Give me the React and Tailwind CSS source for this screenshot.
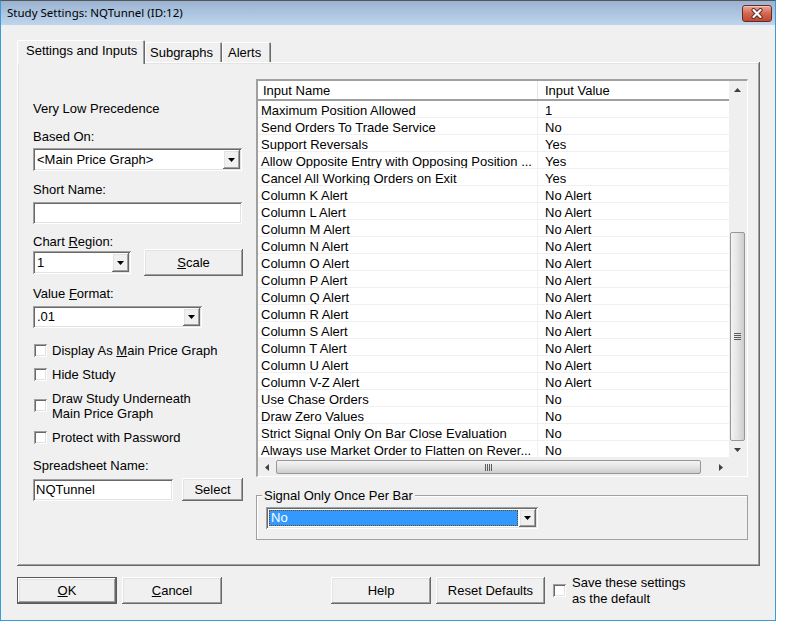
import React from "react";

const RAISED =
  "shadow-[inset_-1px_-1px_#696969,inset_1px_1px_#ffffff,inset_-2px_-2px_#a0a0a0,inset_2px_2px_#e3e3e3]";
const SUNKEN =
  "shadow-[inset_1px_1px_#a0a0a0,inset_-1px_-1px_#ffffff,inset_2px_2px_#696969,inset_-2px_-2px_#e3e3e3]";

function Tri({ dir = "down", color = "#000" }) {
  if (dir === "down")
    return (
      <svg width="7" height="4" viewBox="0 0 7 4">
        <path d="M0 0H7L3.5 4Z" fill={color} />
      </svg>
    );
  if (dir === "up")
    return (
      <svg width="7" height="4" viewBox="0 0 7 4">
        <path d="M0 4H7L3.5 0Z" fill={color} />
      </svg>
    );
  if (dir === "left")
    return (
      <svg width="4" height="7" viewBox="0 0 4 7">
        <path d="M4 0V7L0 3.5Z" fill={color} />
      </svg>
    );
  return (
    <svg width="4" height="7" viewBox="0 0 4 7">
      <path d="M0 0V7L4 3.5Z" fill={color} />
    </svg>
  );
}

function Combo({ className, children, inner }) {
  return (
    <div className={`flex bg-white p-[2px] ${SUNKEN} ${className}`}>
      {inner || (
        <div className="flex-1 flex items-center pl-[2px] whitespace-nowrap overflow-hidden">
          {children}
        </div>
      )}
      <div className={`w-[17px] shrink-0 flex items-center justify-center bg-[#f0f0f0] ${RAISED}`}>
        <Tri />
      </div>
    </div>
  );
}

function Field({ className, children }) {
  return (
    <div className={`flex items-center bg-white pl-[3px] ${SUNKEN} ${className}`}>{children}</div>
  );
}

function Btn({ className, children }) {
  return (
    <div className={`flex items-center justify-center bg-[#f0f0f0] ${RAISED} ${className}`}>
      {children}
    </div>
  );
}

function Check() {
  return <div className={`w-[13px] h-[13px] shrink-0 bg-white ${SUNKEN}`} />;
}

const ROWS = [
  ["Maximum Position Allowed", "1"],
  ["Send Orders To Trade Service", "No"],
  ["Support Reversals", "Yes"],
  ["Allow Opposite Entry with Opposing Position ...", "Yes"],
  ["Cancel All Working Orders on Exit", "Yes"],
  ["Column K Alert", "No Alert"],
  ["Column L Alert", "No Alert"],
  ["Column M Alert", "No Alert"],
  ["Column N Alert", "No Alert"],
  ["Column O Alert", "No Alert"],
  ["Column P Alert", "No Alert"],
  ["Column Q Alert", "No Alert"],
  ["Column R Alert", "No Alert"],
  ["Column S Alert", "No Alert"],
  ["Column T Alert", "No Alert"],
  ["Column U Alert", "No Alert"],
  ["Column V-Z Alert", "No Alert"],
  ["Use Chase Orders", "No"],
  ["Draw Zero Values", "No"],
  ["Strict Signal Only On Bar Close Evaluation", "No"],
  ["Always use Market Order to Flatten on Rever...", "No"],
];

function InputsTable() {
  return (
    <div className="w-[492px] h-[398px] flex flex-col border-t-2 border-l-2 border-r border-b border-t-[#a0a0a0] border-l-[#a0a0a0] border-r-white border-b-white">
      <div className="flex flex-1 min-h-0">
        <div className="w-[471px] flex flex-col bg-white">
          <div className="h-[20px] flex border-b-2 border-[#a0a0a0] bg-white">
            <div className="w-[280px] pl-[5px] pt-[1px] leading-[17px] border-r border-[#e5e5e5]">Input Name</div>
            <div className="flex-1 pl-[7px] pt-[1px] leading-[17px]">Input Value</div>
          </div>
          {ROWS.map(([n, v], i) => (
            <div key={i} className="h-[17px] flex border-b border-[#f0f0f0]">
              <div className="w-[280px] pl-[3px] pt-[3px] leading-[13px] whitespace-nowrap overflow-hidden border-r border-[#f0f0f0]">
                {n}
              </div>
              <div className="flex-1 pl-[7px] pt-[3px] leading-[13px] whitespace-nowrap">{v}</div>
            </div>
          ))}
        </div>
        <div className="w-[17px] flex flex-col bg-[#efefef]">
          <div className="h-[17px] flex items-center justify-center">
            <Tri dir="up" color="#404040" />
          </div>
          <div className="flex-1" />
          <div className="h-[209px] mx-[1px] rounded-[2px] border border-[#979797] bg-gradient-to-r from-[#f4f4f4] via-[#e4e4e4] to-[#cdcdcd] flex items-center justify-center">
            <div className="flex flex-col gap-[1px]">
              <div className="w-[7px] h-[1px] bg-[#5c5c5c]" />
              <div className="w-[7px] h-[1px] bg-[#5c5c5c]" />
              <div className="w-[7px] h-[1px] bg-[#5c5c5c]" />
              <div className="w-[7px] h-[1px] bg-[#5c5c5c]" />
            </div>
          </div>
          <div className="h-[17px] flex items-center justify-center">
            <Tri dir="down" color="#404040" />
          </div>
        </div>
      </div>
      <div className="h-[18px] flex">
        <div className="w-[471px] flex bg-[#efefef]">
          <div className="w-[17px] flex items-center justify-center">
            <Tri dir="left" color="#404040" />
          </div>
          <div className="w-[425px] my-[2px] ml-[1px] rounded-[2px] border border-[#979797] bg-gradient-to-b from-[#f4f4f4] via-[#e4e4e4] to-[#cdcdcd] flex items-center justify-center">
            <div className="flex gap-[1px]">
              <div className="w-[1px] h-[7px] bg-[#5c5c5c]" />
              <div className="w-[1px] h-[7px] bg-[#5c5c5c]" />
              <div className="w-[1px] h-[7px] bg-[#5c5c5c]" />
              <div className="w-[1px] h-[7px] bg-[#5c5c5c]" />
            </div>
          </div>
          <div className="flex-1" />
          <div className="w-[17px] flex items-center justify-center">
            <Tri dir="right" color="#404040" />
          </div>
        </div>
        <div className="w-[17px] bg-[#efefef]" />
      </div>
    </div>
  );
}

export default function App() {
  return (
    <div className="w-[799px] h-[635px] bg-white font-['Liberation_Sans',Arial,sans-serif] text-[13px] text-black">
      <div className="w-[776px] h-[621px] flex flex-col border border-[#3b9ad8] border-t-[#555555] bg-[#f0f0f0]">
        {/* Title bar */}
        <div className="h-[24px] flex justify-between bg-gradient-to-b from-[#9ab3d1] to-[#bfd5ed]">
          <div className="pl-[6px] flex items-center font-['Noto_Sans',sans-serif] text-[11.5px] text-black">
            Study Settings: NQTunnel (ID:12)
          </div>
          <div className="mt-[4px] mr-[3px] w-[30px] h-[17px] rounded-[3px] border border-[#6a2a23] bg-gradient-to-b from-[#e9a898] via-[#d4664f] to-[#c04834] shadow-[inset_0_1px_#f4c7ba] flex items-center justify-center">
            <svg width="14" height="11" viewBox="0 0 14 11">
              <path d="M3.5 2 L10.5 9 M10.5 2 L3.5 9" stroke="#5b2620" strokeWidth="4" strokeLinecap="round" />
              <path d="M3.5 2 L10.5 9 M10.5 2 L3.5 9" stroke="#ffffff" strokeWidth="2.2" strokeLinecap="round" />
            </svg>
          </div>
        </div>

        {/* Body */}
        <div className="flex-1 flex flex-col pl-[16px] pr-[15px] pt-[15px]">
          {/* Tabs */}
          <div className="flex items-end h-[22px]">
            <div className="relative z-10 w-[128px] h-[24px] -mb-[2px] pl-[9px] pt-[3px] leading-[16px] bg-[#f0f0f0] shadow-[inset_1px_1px_#ffffff,inset_-1px_0_#696969,inset_-2px_0_#a0a0a0] rounded-t-[2px]">
              Settings and Inputs
            </div>
            <div className="w-[77px] h-[20px] pl-[5px] pt-[3px] leading-[16px] shadow-[inset_1px_1px_#ffffff,inset_-1px_0_#696969,inset_-2px_0_#a0a0a0] rounded-t-[2px]">
              Subgraphs
            </div>
            <div className="w-[49px] h-[20px] pl-[6px] pt-[3px] leading-[16px] shadow-[inset_1px_1px_#ffffff,inset_-1px_0_#696969,inset_-2px_0_#a0a0a0] rounded-t-[2px]">
              Alerts
            </div>
          </div>

          {/* Panel */}
          <div className={`w-[743px] h-[504px] flex pl-[16px] bg-[#f0f0f0] ${RAISED}`}>
            {/* Left column */}
            <div className="w-[210px] flex flex-col">
              <div className="mt-[37px] h-[16px] pt-[2px] leading-[16px]">Very Low Precedence</div>
              <div className="mt-[12px] h-[16px] pt-[2px] leading-[16px]">Based On:</div>
              <Combo className="mt-[5px] w-[209px] h-[23px]">&lt;Main Price Graph&gt;</Combo>
              <div className="mt-[9px] h-[16px] pt-[2px] leading-[16px]">Short Name:</div>
              <Field className="mt-[6px] w-[209px] h-[22px]" />
              <div className="mt-[9px] h-[16px] pt-[1px] leading-[16px]">
                Chart <span className="underline">R</span>egion:
              </div>
              <div className="flex items-start h-[27px]">
                <Combo className="mt-[2px] w-[98px] h-[23px]">1</Combo>
                <Btn className="ml-[13px] w-[99px] h-[27px]">
                  <span>
                    <span className="underline">S</span>cale
                  </span>
                </Btn>
              </div>
              <div className="mt-[8px] h-[16px] pt-[2px] leading-[16px]">
                Value <span className="underline">F</span>ormat:
              </div>
              <Combo className="mt-[6px] w-[169px] h-[22px]">.01</Combo>

              <div className="mt-[14px] flex items-center gap-[5px] ml-[1px] h-[16px]">
                <Check />
                <span className="leading-[16px] pt-[1px]">
                  Display As <span className="underline">M</span>ain Price Graph
                </span>
              </div>
              <div className="mt-[8px] flex items-center gap-[5px] ml-[1px] h-[16px]">
                <Check />
                <span className="leading-[16px] pt-[1px]">Hide Study</span>
              </div>
              <div className="mt-[8px] flex items-center gap-[5px] ml-[1px] h-[30px]">
                <Check />
                <span className="leading-[15px] pt-[1px]">
                  Draw Study Underneath
                  <br />
                  Main Price Graph
                </span>
              </div>
              <div className="mt-[9px] flex items-center gap-[5px] ml-[1px] h-[16px]">
                <Check />
                <span className="leading-[16px] pt-[1px]">Protect with Password</span>
              </div>
              <div className="mt-[12px] h-[16px] pt-[1px] leading-[16px]">Spreadsheet Name:</div>
              <div className="mt-[5px] flex items-start h-[23px]">
                <Field className="mt-[1px] w-[140px] h-[22px]">NQTunnel</Field>
                <Btn className="ml-[9px] w-[61px] h-[23px]">Select</Btn>
              </div>
            </div>

            {/* Right column */}
            <div className="ml-[13px] flex flex-col mt-[17px]">
              <InputsTable />
              <fieldset className="mt-[10px] w-[492px] border border-[#a0a0a0] shadow-[inset_1px_1px_#ffffff] px-[5px] pb-[10px]">
                <legend className="px-[2px] pt-[1px] leading-[16px] bg-[#f0f0f0]">Signal Only Once Per Bar</legend>
                <Combo
                  className="mt-[3px] ml-[4px] w-[272px] h-[22px]"
                  inner={
                    <div className="flex-1 flex p-[1px]">
                      <div className="flex-1 flex items-center pl-[1px] bg-[#3399ff] text-white border border-dotted border-[#6b4a10]">
                        No
                      </div>
                    </div>
                  }
                />
              </fieldset>
            </div>
          </div>

          {/* Bottom buttons */}
          <div className="mt-[11px] flex items-center h-[27px]">
            <Btn className="w-[100px] h-[27px] border border-[#5a5a5a]">
              <span>
                <span className="underline">O</span>K
              </span>
            </Btn>
            <Btn className="ml-[5px] w-[100px] h-[27px]">
              <span>
                <span className="underline">C</span>ancel
              </span>
            </Btn>
            <Btn className="ml-[109px] w-[100px] h-[27px]">Help</Btn>
            <Btn className="ml-[5px] w-[109px] h-[27px]">Reset Defaults</Btn>
            <div className="ml-[8px] flex items-center gap-[6px]">
              <Check />
              <span className="leading-[16px] pt-[1px]">
                Save these settings
                <br />
                as the default
              </span>
            </div>
          </div>
        </div>
      </div>
    </div>
  );
}
